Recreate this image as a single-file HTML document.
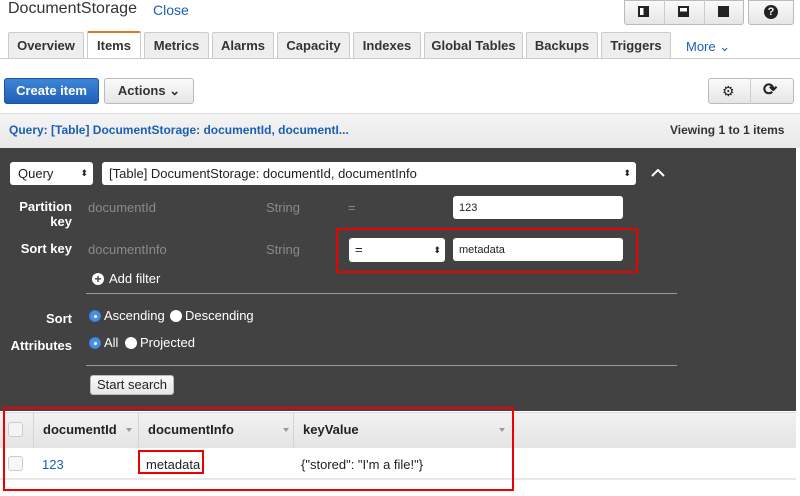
<!DOCTYPE html>
<html><head><style>
*{box-sizing:border-box;margin:0;padding:0}
body{width:800px;height:496px;background:#fff;font-family:"Liberation Sans",sans-serif;position:relative;overflow:hidden;font-size:13px;color:#222}
.a{position:absolute}
.tab{position:absolute;top:32px;height:26px;background:#eee;border:1px solid #ccc;border-bottom:none;font-weight:bold;font-size:13px;text-align:center;line-height:26px;color:#333;border-radius:2px 2px 0 0}
.btn{position:absolute;border:1px solid #bbb;border-radius:3px;background:linear-gradient(#fafafa,#e6e6e6)}
.lbl{position:absolute;color:#fff;font-weight:bold;font-size:13px;text-align:right;width:72px;left:0}
.gr{position:absolute;color:#8a8a8a;font-size:13px}
.inp{position:absolute;background:#fff;border-radius:3px;font-size:11px;color:#222;padding-left:6px;line-height:24px}
.rad{position:absolute;width:12px;height:12px;border-radius:50%;background:#fff}
.rad.on{background:#4a90e2;border:1px solid #3a7bd5}
.rad.on::after{content:"";position:absolute;left:4px;top:4px;width:3px;height:3px;background:#fff;border-radius:50%}
.wt{position:absolute;color:#fff;font-size:13px}
.th{position:absolute;top:412px;height:36px;font-weight:bold;font-size:13px;line-height:36px;color:#222;border-left:1px solid #d5d5d5}
.arr{position:absolute;top:16px;width:0;height:0;border-left:3px solid transparent;border-right:3px solid transparent;border-top:4px solid #999}
</style></head><body>
<div class="a" style="left:8px;top:0px;font-size:16px;color:#333">DocumentStorage</div>
<div class="a" style="left:153px;top:2px;font-size:14px;color:#1a5fb4">Close</div>
<div class="btn" style="left:624px;top:0;width:120px;height:25px;border-radius:0 0 3px 3px"></div>
<div class="a" style="left:664px;top:0;width:1px;height:25px;background:#ccc"></div>
<div class="a" style="left:704px;top:0;width:1px;height:25px;background:#ccc"></div>
<div class="a" style="left:638px;top:6px;width:11px;height:11px;border:2px solid #222;background:linear-gradient(90deg,#fff 50%,#222 50%)"></div>
<div class="a" style="left:678px;top:6px;width:11px;height:11px;border:2px solid #222;background:linear-gradient(#fff 50%,#222 50%)"></div>
<div class="a" style="left:718px;top:6px;width:11px;height:11px;background:#222"></div>
<div class="btn" style="left:748px;top:0;width:46px;height:25px;border-radius:0 0 3px 3px"></div>
<div class="a" style="left:764px;top:5px;width:14px;height:14px;border-radius:50%;background:#222;color:#fff;font-size:11px;font-weight:bold;text-align:center;line-height:14px">?</div>

<div class="a" style="left:0;top:58px;width:800px;height:1px;background:#ccc"></div>
<div class="tab" style="left:8px;width:76px">Overview</div>
<div class="tab" style="left:87px;width:54px;background:#fff;border-top:2px solid #e07b24;height:27px;top:31px">Items</div>
<div class="tab" style="left:144px;width:65px">Metrics</div>
<div class="tab" style="left:212px;width:62px">Alarms</div>
<div class="tab" style="left:277px;width:73px">Capacity</div>
<div class="tab" style="left:353px;width:68px">Indexes</div>
<div class="tab" style="left:424px;width:99px">Global Tables</div>
<div class="tab" style="left:526px;width:72px">Backups</div>
<div class="tab" style="left:601px;width:70px">Triggers</div>
<div class="a" style="left:686px;top:39px;font-size:13px;color:#1a5fb4">More ⌄</div>

<div class="a" style="left:4px;top:78px;width:95px;height:26px;border-radius:3px;background:linear-gradient(#3f86d6,#1e60b8);border:1px solid #1a55a0;color:#fff;font-weight:bold;line-height:24px;text-align:center">Create item</div>
<div class="btn" style="left:104px;top:78px;width:90px;height:26px;font-weight:bold;line-height:24px;text-align:center;color:#333">Actions ⌄</div>
<div class="btn" style="left:708px;top:78px;width:86px;height:26px"></div>
<div class="a" style="left:750px;top:78px;width:1px;height:26px;background:#ccc"></div>
<div class="a" style="left:722px;top:83px;font-size:14px;color:#222">⚙</div>
<div class="a" style="left:763px;top:80px;font-size:17px;font-weight:bold;color:#222">⟳</div>

<div class="a" style="left:0;top:113px;width:800px;height:35px;background:linear-gradient(#f4f4f4,#e8e8e8);border-top:1px solid #ddd"></div>
<div class="a" style="left:9px;top:123px;font-size:12px;font-weight:bold;color:#1a5fb4">Query: [Table] DocumentStorage: documentId, documentI...</div>
<div class="a" style="left:670px;top:123px;font-size:12px;font-weight:bold;color:#333">Viewing 1 to 1 items</div>

<div class="a" style="left:0;top:148px;width:796px;height:263px;background:#424242"></div>
<div class="inp" style="left:10px;top:162px;width:83px;height:23px;font-size:13px;line-height:23px;padding-left:8px">Query<span style="position:absolute;right:5px;font-size:9px">⬍</span></div>
<div class="inp" style="left:102px;top:162px;width:534px;height:23px;font-size:13px;line-height:23px;padding-left:7px">[Table] DocumentStorage: documentId, documentInfo<span style="position:absolute;right:5px;font-size:9px">⬍</span></div>
<svg class="a" style="left:651px;top:169px" width="14" height="9"><path d="M1 7 L7 1 L13 7" stroke="#fff" stroke-width="2" fill="none"/></svg>

<div class="lbl" style="top:199px">Partition<br>key</div>
<div class="gr" style="left:88px;top:200px">documentId</div>
<div class="gr" style="left:266px;top:200px">String</div>
<div class="gr" style="left:348px;top:200px">=</div>
<div class="inp" style="left:453px;top:196px;width:170px;height:23px">123</div>

<div class="lbl" style="top:241px">Sort key</div>
<div class="gr" style="left:88px;top:242px">documentInfo</div>
<div class="gr" style="left:266px;top:242px">String</div>
<div class="a" style="left:336px;top:228px;width:302px;height:45px;border:2px solid #e00"></div>
<div class="inp" style="left:349px;top:238px;width:96px;height:24px;font-size:13px">=<span style="position:absolute;right:4px;font-size:9px">⬍</span></div>
<div class="inp" style="left:453px;top:238px;width:170px;height:23px">metadata</div>

<div class="a" style="left:92px;top:273px;width:12px;height:12px;border-radius:50%;background:#fff;color:#424242;font-size:12px;font-weight:bold;line-height:12px;text-align:center">+</div>
<div class="wt" style="left:109px;top:271px">Add filter</div>
<div class="a" style="left:86px;top:293px;width:591px;height:1px;background:#999"></div>

<div class="lbl" style="top:311px">Sort</div>
<div class="rad on" style="left:89px;top:310px"></div><div class="wt" style="left:104px;top:308px">Ascending</div>
<div class="rad" style="left:170px;top:310px"></div><div class="wt" style="left:185px;top:308px">Descending</div>
<div class="lbl" style="top:338px">Attributes</div>
<div class="rad on" style="left:89px;top:337px"></div><div class="wt" style="left:104px;top:335px">All</div>
<div class="rad" style="left:125px;top:337px"></div><div class="wt" style="left:140px;top:335px">Projected</div>
<div class="a" style="left:86px;top:365px;width:591px;height:1px;background:#999"></div>
<div class="btn" style="left:90px;top:375px;width:84px;height:20px;font-size:13px;line-height:18px;text-align:center;color:#222">Start search</div>

<div class="a" style="left:0;top:412px;width:796px;height:36px;background:linear-gradient(#f2f2f2,#e4e4e4);border-top:1px solid #ddd"></div>
<div class="a" style="left:8px;top:422px;width:15px;height:15px;border:1px solid #ccc;border-radius:3px;background:#f4f4f4"></div>
<div class="th" style="left:33px;width:105px;padding-left:9px">documentId<span class="arr" style="left:92px"></span></div>
<div class="th" style="left:138px;width:155px;padding-left:9px">documentInfo<span class="arr" style="left:144px"></span></div>
<div class="th" style="left:293px;width:218px;padding-left:9px">keyValue<span class="arr" style="left:205px"></span></div>
<div class="a" style="left:8px;top:456px;width:15px;height:15px;border:1px solid #ccc;border-radius:3px;background:#f7f7f7"></div>
<div class="a" style="left:42px;top:457px;color:#1a5fb4">123</div>
<div class="a" style="left:146px;top:457px">metadata</div>
<div class="a" style="left:138px;top:450px;width:66px;height:24px;border:2px solid #e00"></div>
<div class="a" style="left:301px;top:457px">{"stored": "I'm a file!"}</div>
<div class="a" style="left:0;top:478px;width:796px;height:2px;background:#e8e8e8"></div>
<div class="a" style="left:3px;top:407px;width:511px;height:84px;border:2px solid #e00"></div>
</body></html>
